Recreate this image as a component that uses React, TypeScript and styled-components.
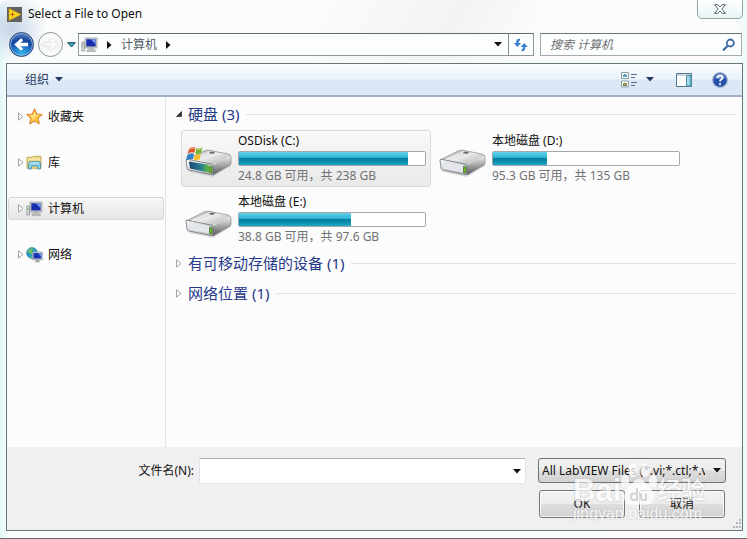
import React from "react";
import styled, { createGlobalStyle } from "styled-components";

const Global = createGlobalStyle`
  * { box-sizing: border-box; }
  body {
    margin: 0;
    background: #fff;
    color: #101010;
    font: 12px/18px "Noto Sans", "Noto Sans CJK SC", sans-serif;
  }
  button, input, select { font: inherit; color: inherit; margin: 0; }
  button { padding: 0; border: 0; background: none; }
  svg { display: block; flex: none; }
`;

const Window = styled.main`
  position: relative;
  display: flex;
  flex-direction: column;
  width: 100%;
  min-height: 100vh;
  padding: 0 4px 7px 6px;
  overflow: hidden;
  border-bottom: 1px solid #626a6c;
  border-top-left-radius: 7px;
  background:
    radial-gradient(circle at 12px 28px, #c5d3e6 0, transparent 34px),
    linear-gradient(115deg, transparent 40%, #f2f3f3 60%, transparent 72%) 0 0 / 100% 62px no-repeat,
    linear-gradient(90deg, #e2f8fa, #fafcfc 8px, #fcfcfc 98%, #effafa);
  background-color: #e9fbfb;
`;

const TitleBar = styled.header`
  display: flex;
  align-items: flex-start;
  height: 33px;
`;

const Title = styled.h1`
  display: flex;
  align-items: center;
  gap: 6px;
  flex: 1;
  margin: 0;
  padding: 5px 0 0 1px;
  font-size: 12px;
  font-weight: 400;
`;

const CloseButton = styled.button`
  display: grid;
  place-items: center;
  width: 46px;
  height: 19px;
  border: 1px solid #94a3a6;
  border-top: 0;
  border-radius: 0 0 5px 5px;
  background: linear-gradient(#fff, #e7f5f5);
`;

const NavRow = styled.nav`
  display: flex;
  align-items: center;
  height: 23px;
  margin-bottom: 7px;
`;

const History = styled.div`
  display: flex;
  align-items: center;
  width: 72px;
  gap: 4px;
  padding-left: 3px;
`;

const RoundButton = styled.button<{ $active?: boolean }>`
  display: grid;
  flex: none;
  place-items: center;
  width: 25px;
  height: 25px;
  border: 1px solid ${(p) => (p.$active ? "#29467a" : "#8c9299")};
  border-radius: 50%;
  background: ${(p) =>
    p.$active
      ? "radial-gradient(circle at 50% 100%, #38c5f4 0, #1d66bd 45%, #13459a 62%, #7398cd 100%)"
      : "linear-gradient(#fff, #eef0f0 50%, #fcfdfd)"};
  box-shadow: inset 0 0 0 1px ${(p) => (p.$active ? "#84b1df" : "#fff")};
`;

const AddressBar = styled.div`
  display: flex;
  flex: 1;
  height: 23px;
  border: 1px solid #90979b;
  border-top-color: #62686b;
  background: #fdfefe;
`;

const Crumbs = styled.div`
  display: flex;
  flex: 1;
  align-items: center;
  gap: 9px;
  padding-left: 2px;
  color: #535e69;
`;

const BarButton = styled.button<{ $divided?: boolean }>`
  display: grid;
  place-items: center;
  width: ${(p) => (p.$divided ? "25px" : "20px")};
  border-left: ${(p) => (p.$divided ? "1px solid #858c90" : "0")};
`;

const SearchBox = styled.div`
  display: flex;
  align-items: center;
  width: 202px;
  height: 23px;
  margin: 0 1px 0 6px;
  padding: 0 5px 0 9px;
  border: 1px solid #a3abae;
  border-top-color: #6d7478;
  background: #fdfefe;
`;

const SearchInput = styled.input`
  flex: 1;
  min-width: 0;
  padding: 0;
  border: 0;
  outline: 0;
  background: transparent;
  font-style: italic;
  &::placeholder { color: #6d7072; opacity: 1; }
`;

const Panel = styled.section`
  display: flex;
  flex: 1;
  flex-direction: column;
  border: 1px solid #66757b;
  background: #fcfcfc;
`;

const Toolbar = styled.div`
  display: flex;
  align-items: center;
  height: 33px;
  padding: 0 14px 0 18px;
  border-bottom: 2px solid #a1b0c8;
  background: linear-gradient(#fbfdff, #ecf3fb 48%, #dce7f5 52%, #dce8f6);
  color: #263b62;
`;

const ToolButton = styled.button<{ $gap?: number }>`
  display: flex;
  align-items: center;
  gap: 6px;
  margin-right: ${(p) => p.$gap ?? 0}px;
`;

const Spacer = styled.div`
  flex: 1;
`;

const Body = styled.div`
  display: flex;
  flex: 1;
`;

const Sidebar = styled.aside`
  display: flex;
  flex-direction: column;
  gap: 23px;
  width: 159px;
  padding: 8px 1px;
  border-right: 1px solid #dfe5ea;
`;

const Place = styled.button<{ $selected?: boolean }>`
  display: grid;
  grid-template-columns: 9px 17px 1fr;
  align-items: center;
  column-gap: 0;
  height: 23px;
  padding-left: 8px;
  border: 1px solid ${(p) => (p.$selected ? "#d6d7d8" : "transparent")};
  border-radius: 3px;
  background: ${(p) => (p.$selected ? "linear-gradient(#f7f7f7, #e5e5e5)" : "none")};
  text-align: left;
`;

const PlaceName = styled.span`
  padding-left: 5px;
`;

const Content = styled.div`
  flex: 1;
  min-width: 0;
  padding: 2px 6px 0 9px;
`;

const GroupHeader = styled.h2`
  display: flex;
  align-items: center;
  gap: 5px;
  height: 30px;
  margin: 0;
  color: #253a89;
  font-size: 15px;
  font-weight: 400;
  line-height: 22px;
  &::after {
    content: "";
    flex: 1;
    height: 1px;
    margin-left: 2px;
    background: #dfe2e5;
  }
`;

const Drives = styled.div`
  display: grid;
  grid-template-columns: repeat(auto-fill, 250px);
  gap: 4px;
  padding: 1px 0 0 6px;
`;

const DriveTile = styled.article<{ $selected?: boolean }>`
  display: flex;
  align-items: center;
  gap: 5px;
  height: 57px;
  padding: 0 4px 0 3px;
  border: 1px solid ${(p) => (p.$selected ? "#dadbdc" : "transparent")};
  border-radius: 3px;
  background: ${(p) => (p.$selected ? "linear-gradient(#f9f9f9, #e9e9e9)" : "none")};
`;

const DriveText = styled.div`
  flex: 1;
  min-width: 0;
  white-space: nowrap;
`;

const DriveSpace = styled.div`
  color: #707274;
`;

const Meter = styled.div`
  height: 15px;
  margin: 1px 0;
  border: 1px solid #a4a8aa;
  border-radius: 2px;
  background: #fff;
`;

const MeterFill = styled.div`
  height: 100%;
  background: linear-gradient(#65d1e8, #2eb3d0 42%, #067d9f 50%, #098fae 75%, #20abc5);
`;

const Footer = styled.form`
  display: grid;
  grid-template-columns: 187px 1fr 188px;
  gap: 6px 5px;
  align-content: start;
  height: 83px;
  padding: 11px 16px 0 0;
  background: #f0f0f0;
`;

const FileLabel = styled.label`
  text-align: right;
  line-height: 26px;
`;

const Combo = styled.div`
  display: flex;
  height: 26px;
  margin-right: 7px;
  border: 1px solid #e0e3e4;
  border-top-color: #aaaeb0;
  border-radius: 2px;
  background: #fff;
`;

const ComboButton = styled.button`
  display: grid;
  place-items: center;
  width: 16px;
`;

const FileInput = styled.input`
  flex: 1;
  min-width: 0;
  border: 0;
  outline: 0;
  background: transparent;
`;

const SelectWrap = styled.div`
  display: flex;
  align-items: center;
  height: 25px;
  padding-right: 4px;
  border: 1px solid #6f7273;
  border-radius: 3px;
  background: linear-gradient(#f3f3f3, #ececec 48%, #dedede 52%, #d2d2d2);
`;

const TypeSelect = styled.select`
  appearance: none;
  flex: 1;
  min-width: 0;
  margin-right: 8px;
  padding: 0 0 0 3px;
  border: 0;
  outline: 0;
  background: transparent;
  overflow: hidden;
  text-overflow: clip;
`;

const Actions = styled.div`
  display: grid;
  grid-template-columns: 1fr 1fr;
  grid-column: 3;
  gap: 14px;
  padding: 0 1px;
`;

const DialogButton = styled.button`
  height: 28px;
  border: 1px solid #747778;
  border-radius: 3px;
  background: linear-gradient(#f4f4f4, #ececec 48%, #dedede 52%, #d1d1d1);
  box-shadow: inset 0 0 0 1px #f8f8f8;
`;

const Grip = styled.div`
  position: absolute;
  right: 5px;
  bottom: 9px;
`;

const Watermark = styled.div`
  position: absolute;
  right: 40px;
  bottom: 16px;
  width: 134px;
  color: #fff;
  opacity: 0.75;
  pointer-events: none;
  text-shadow: 0 0 2px #aaa;
  white-space: nowrap;
`;

const Brand = styled.div`
  display: flex;
  align-items: flex-end;
  height: 43px;
  font: 700 31px/30px "Liberation Sans", "Noto Sans CJK SC", sans-serif;
`;

const BrandCjk = styled.span`
  font-size: 24px;
  font-weight: 500;
`;

const WatermarkUrl = styled.div`
  font: 16px/16px "Liberation Sans", sans-serif;
`;

const Arrow = ({ dir = "down", color = "#111" }: { dir?: "down" | "right"; color?: string }) =>
  dir === "down" ? (
    <svg width="8" height="5" viewBox="0 0 8 5"><path d="M0 0h8L4 4.5z" fill={color} /></svg>
  ) : (
    <svg width="5" height="8" viewBox="0 0 5 8"><path d="M0 0v8l4.5-4z" fill={color} /></svg>
  );

const Expander = ({ open }: { open?: boolean }) => (
  <svg width="8" height="9" viewBox="0 0 8 9">
    {open ? (
      <path d="M6.5 1.5v5h-5z" fill="#393b3e" stroke="#222" strokeWidth=".7" />
    ) : (
      <path d="M1.5.8v7.4L6 4.5z" fill="#fff" stroke="#a2a5a8" />
    )}
  </svg>
);

const AppIcon = () => (
  <svg width="15" height="15" viewBox="0 0 15 15">
    <path d="M0 0h15v15H0z" fill="#62615e" />
    <path d="M2 1.5 14 7.5 2 13.5z" fill="#f9d51d" stroke="#c99e13" strokeWidth=".6" />
    <path d="M3.5 7.5h4M5.5 5.5v4" stroke="#b15a16" />
  </svg>
);

const CloseIcon = () => (
  <svg width="12" height="10" viewBox="0 0 12 10">
    <path d="M.7.7h3.1L6 3 8.2.7h3.1L7.9 5l3.4 4.3H8.2L6 7 3.8 9.3H.7L4.1 5z" fill="#fff" stroke="#565c68" strokeLinejoin="round" />
  </svg>
);

const HistoryArrow = ({ back }: { back?: boolean }) => (
  <svg width="17" height="15" viewBox="0 0 17 15">
    {back ? (
      <path d="m8 1.2 2.2 2.1-2.6 2.5H15v3.4H7.6l2.6 2.5L8 13.8 1.3 7.5z" fill="#fff" />
    ) : (
      <path d="m9 1.2-2.2 2.1 2.6 2.5H2v3.4h7.4l-2.6 2.5L9 13.8l6.7-6.3z" fill="#fafcfc" stroke="#dde0e0" strokeWidth=".7" />
    )}
  </svg>
);

const ComputerIcon = () => (
  <svg width="17" height="16" viewBox="0 0 17 16">
    <path d="M.8 5h2.7v9H.8z" fill="#d7d9d5" stroke="#858e90" strokeWidth=".7" />
    <path d="M1.3 8h1.4" stroke="#55a252" />
    <path d="M4 1h12v10H4z" fill="#d7d7d0" stroke="#8e9396" strokeWidth=".7" />
    <path d="M5.3 2.2h9.4v7.3H5.3z" fill="#182dae" />
    <path d="M9.5 2.2h5.2v5z" fill="#7198ed" />
    <path d="M8.3 11h3.5l.7 2h1.8v1.6H6V13h1.7z" fill="#bec4c4" stroke="#899294" strokeWidth=".5" />
  </svg>
);

const StarIcon = () => (
  <svg width="17" height="17" viewBox="0 0 16 16">
    <path d="m8 .8 2.1 4.8 5.1.5-3.8 3.5 1.1 5.2L8 12.2l-4.5 2.6 1.1-5.2L.8 6.1l5.1-.5z" fill="#ffc548" stroke="#d8882f" strokeLinejoin="round" />
    <path d="m8 3 1.3 3.6 3.2.4-4 1.5L6 12l.2-3-3-2 3.5-.4z" fill="#ffe27b" />
  </svg>
);

const LibraryIcon = () => (
  <svg width="17" height="16" viewBox="0 0 17 16">
    <path d="M1 2.3h5l1-1h8v12H1z" fill="#ecd883" stroke="#b99e49" strokeWidth=".8" />
    <path d="M2 4.2h12" stroke="#fff2b4" />
    <path d="M2.5 14V8.5q0-2 2-2h8q2 0 2 2V14h-3v-3h-6v3z" fill="#86cfe7" stroke="#438ba5" strokeWidth=".8" />
    <path d="M4 8h9" stroke="#d0f1fa" />
  </svg>
);

const NetworkIcon = () => (
  <svg width="17" height="16" viewBox="0 0 17 16">
    <circle cx="6" cy="6" r="5.4" fill="#2598cf" stroke="#176b99" strokeWidth=".6" />
    <path d="M2 3q3-3 6-1L6 4l1 2-2 2-1-2-3-.5zM4 9l3 1-1 1.5q-2-.5-2-2.5" fill="#66bd68" />
    <path d="M6.5 5h9.8v7.7H6.5z" fill="#d7dad8" stroke="#818b91" strokeWidth=".6" />
    <path d="M7.5 6h7.8v5.6H7.5z" fill="#1933b4" />
    <path d="M11.7 6h3.6v4z" fill="#628bea" />
    <path d="M10 13h3l1 2.3H9z" fill="#9aa3a6" />
  </svg>
);

const RefreshIcon = () => (
  <svg width="16" height="14" viewBox="0 0 16 14" fill="#3980d1">
    <path d="M7 .8Q2.8.5 3.2 5H.8L4.4 9 8 5H5.5Q5.4 2.8 7 2.6z" />
    <path d="M8.5 13.2q4.2.2 3.8-4.2h2.5l-3.6-4-3.6 4h2.5q.1 2.2-1.6 2.4z" />
  </svg>
);

const SearchIcon = () => (
  <svg width="14" height="14" viewBox="0 0 14 14" fill="none">
    <circle cx="8.4" cy="5" r="3.5" stroke="#406ba5" strokeWidth="1.8" />
    <path d="m5.7 7.8-4 4" stroke="#406ba5" strokeWidth="2.3" strokeLinecap="round" />
  </svg>
);

const ViewIcon = () => (
  <svg width="16" height="16" viewBox="0 0 16 16">
    <path d="M.5.5h7v6h-7zM.5 9h7v6h-7z" fill="#f5fbff" stroke="#8da0a6" />
    <path d="M2 4.8V3l2-1 2 1v1.8z" fill="#3c94b1" />
    <path d="M2 11h4v3H2z" fill="#67834a" />
    <path d="m2 11 2 2 2-2" stroke="#d4b34e" fill="none" />
    <path d="M10 2.5h6M10 5.5h4M10 10.5h6M10 13.5h4" stroke="#5b6d89" />
  </svg>
);

const PaneIcon = () => (
  <svg width="16" height="14" viewBox="0 0 16 14">
    <path d="M.5.5h15v13H.5z" fill="#fcfdff" stroke="#4f7890" />
    <path d="M1 2h14" stroke="#9aacbd" />
    <path d="M10.5 2.5H15V13h-4.5z" fill="#80c9df" stroke="#4c8ba5" />
    <path d="M12 3v9" stroke="#c8eff5" />
  </svg>
);

const HelpIcon = () => (
  <svg width="16" height="16" viewBox="0 0 16 16">
    <circle cx="8" cy="8" r="7.2" fill="#2450a8" stroke="#879dc7" strokeWidth="1.2" />
    <path d="M2.5 6Q4 1.8 8 1.8T13.5 6Q8 8.5 2.5 6" fill="#6689c9" />
    <path d="M5.5 6q.2-2.3 2.6-2.3 2.5 0 2.5 2 0 1.2-1.4 1.9Q8 8.3 8 9.6" fill="none" stroke="#fff" strokeWidth="1.7" />
    <circle cx="8" cy="12" r="1.1" fill="#fff" />
  </svg>
);

const DriveIcon = ({ system }: { system?: boolean }) => (
  <svg width="48" height="36" viewBox="0 -2 48 36">
    <defs>
      <linearGradient id="driveTop" x2="1" y2="1"><stop stopColor="#8f9294" /><stop offset=".45" stopColor="#ededed" /><stop offset="1" stopColor="#a0a2a4" /></linearGradient>
      <linearGradient id="driveSide" x2="0" y2="1"><stop stopColor="#f5f5f5" /><stop offset="1" stopColor="#55585b" /></linearGradient>
      <linearGradient id="driveFront" x2="1" y2="1"><stop stopColor="#fafbff" /><stop offset="1" stopColor="#a6abb3" /></linearGradient>
      <linearGradient id="systemFront" x2="1"><stop stopColor="#1b466b" /><stop offset=".6" stopColor="#267e92" /><stop offset="1" stopColor="#67bd3c" /></linearGradient>
    </defs>
    <path d="M2 25 27 32l19-12v3L28 34 4 29z" fill="#aaa" opacity=".35" />
    <path d="M1 17 19 8q2-1 5-.7L43 11q3 1 1 2L28 23z" fill="url(#driveTop)" stroke="#85888a" strokeWidth=".7" />
    <path d="m28 22 17-10q1 0 1 3v5q0 1-1 2L28 32z" fill="url(#driveSide)" stroke="#76797b" strokeWidth=".6" />
    <path d="M1 17q0-1 2-.6L26 21q2 .5 2 2v8q0 1-2 .6L4 27q-2-.5-2-2z" fill="url(#driveFront)" stroke="#6e7375" strokeWidth=".8" />
    <path d="M4 18.5 24 22v7.5L5 25.5z" fill={system ? "url(#systemFront)" : "#e4e6ec"} />
    <path d="M24.5 23.5 27 24v6l-2.5-.6z" fill="#72bd23" stroke="#315f24" strokeWidth=".6" />
    <path d="M7 17 25 8.7M28 22l16-9.5" fill="none" stroke="#fff" strokeWidth=".7" />
    <ellipse cx="27" cy="9.7" rx="2.8" ry="1" fill="#6a6d70" />
    {system && (
      <g>
        <path d="M4 6q3-3.4 6.5-1.3L9.3 10Q6 8.3 2.5 11z" fill="#df5427" />
        <path d="M11.5 5q3 1.5 6-.7L16 10q-3 2-5.7.4z" fill="#79b72f" />
        <path d="M2.3 12Q6 9.3 9 11l-1.3 5.5Q4.7 15 1 17.5z" fill="#337fc8" />
        <path d="M10 11.2q3 1.5 6-.5l-1.5 5.8q-3 2-5.8.3z" fill="#f8be2c" />
        <path d="M4.5 6.3q2-2 5-.9M12 5.8q2 1 4-.3" stroke="#ffe2b3" strokeWidth=".8" fill="none" />
      </g>
    )}
  </svg>
);

const PawIcon = () => (
  <svg width="36" height="43" viewBox="0 0 36 43" fill="#fff">
    <ellipse cx="12" cy="7" rx="4.8" ry="7" />
    <ellipse cx="24" cy="7" rx="4.8" ry="7" />
    <ellipse cx="4" cy="18" rx="4" ry="6" />
    <ellipse cx="32" cy="18" rx="4" ry="6" />
    <path d="M18 16q4 0 7 5 8 6 8 13 0 8-8 7.5H11Q3 42 3 34q0-7 8-13 3-5 7-5" />
    <path d="M16 25v12h-3q-3 0-3-3.3 0-3.2 3-3.2h3M20 30.5V35q0 2 2 2h3v-6.5" fill="none" stroke="#cacaca" strokeWidth="2" />
  </svg>
);

const drives = [
  { name: "OSDisk (C:)", space: "24.8 GB 可用，共 238 GB", used: 91, system: true },
  { name: "本地磁盘 (D:)", space: "95.3 GB 可用，共 135 GB", used: 29 },
  { name: "本地磁盘 (E:)", space: "38.8 GB 可用，共 97.6 GB", used: 60 },
];

const places = [
  { name: "收藏夹", Icon: StarIcon },
  { name: "库", Icon: LibraryIcon },
  { name: "计算机", Icon: ComputerIcon, selected: true },
  { name: "网络", Icon: NetworkIcon },
];

export default function App() {
  return (
    <>
      <Global />
      <Window>
        <TitleBar>
          <Title><AppIcon />Select a File to Open</Title>
          <CloseButton aria-label="Close"><CloseIcon /></CloseButton>
        </TitleBar>
        <NavRow>
          <History>
            <RoundButton $active aria-label="Back"><HistoryArrow back /></RoundButton>
            <RoundButton aria-label="Forward"><HistoryArrow /></RoundButton>
            <button aria-label="Recent locations">
              <svg width="9" height="6" viewBox="0 0 9 6"><path d="M.7.7h7.6L4.5 5z" fill="#35b3cb" stroke="#223f59" /></svg>
            </button>
          </History>
          <AddressBar>
            <Crumbs><ComputerIcon /><Arrow dir="right" /><span>计算机</span><Arrow dir="right" /></Crumbs>
            <BarButton aria-label="Address history"><Arrow /></BarButton>
            <BarButton $divided aria-label="Refresh"><RefreshIcon /></BarButton>
          </AddressBar>
          <SearchBox>
            <SearchInput aria-label="搜索 计算机" placeholder="搜索 计算机" />
            <SearchIcon />
          </SearchBox>
        </NavRow>
        <Panel>
          <Toolbar>
            <ToolButton>组织<Arrow color="#263b62" /></ToolButton>
            <Spacer />
            <ToolButton $gap={9} aria-label="View"><ViewIcon /></ToolButton>
            <ToolButton $gap={22} aria-label="View options"><Arrow color="#263b62" /></ToolButton>
            <ToolButton $gap={20} aria-label="Preview pane"><PaneIcon /></ToolButton>
            <ToolButton aria-label="Help"><HelpIcon /></ToolButton>
          </Toolbar>
          <Body>
            <Sidebar>
              {places.map(({ name, Icon, selected }) => (
                <Place key={name} $selected={selected}>
                  <Expander /><Icon /><PlaceName>{name}</PlaceName>
                </Place>
              ))}
            </Sidebar>
            <Content>
              <GroupHeader><Expander open />硬盘 (3)</GroupHeader>
              <Drives>
                {drives.map((drive) => (
                  <DriveTile key={drive.name} $selected={drive.system}>
                    <DriveIcon system={drive.system} />
                    <DriveText>
                      <div>{drive.name}</div>
                      <Meter><MeterFill style={{ width: `${drive.used}%` }} /></Meter>
                      <DriveSpace>{drive.space}</DriveSpace>
                    </DriveText>
                  </DriveTile>
                ))}
              </Drives>
              <GroupHeader><Expander />有可移动存储的设备 (1)</GroupHeader>
              <GroupHeader><Expander />网络位置 (1)</GroupHeader>
            </Content>
          </Body>
          <Footer onSubmit={(e) => e.preventDefault()}>
            <FileLabel htmlFor="filename">文件名(N):</FileLabel>
            <Combo>
              <FileInput id="filename" />
              <ComboButton type="button" aria-label="Recent files"><Arrow /></ComboButton>
            </Combo>
            <SelectWrap>
              <TypeSelect aria-label="File type">
                <option>All LabVIEW Files (*.vi;*.ctl;*.vit;*.ctt)</option>
              </TypeSelect>
              <Arrow />
            </SelectWrap>
            <Actions>
              <DialogButton>OK</DialogButton>
              <DialogButton type="button">取消</DialogButton>
            </Actions>
          </Footer>
        </Panel>
        <Grip>
          <svg width="10" height="10" viewBox="0 0 10 10" fill="#b5b8ba">
            <path d="M7 0h2v2H7zM4 3h2v2H4zM7 3h2v2H7zM1 7h2v2H1zM4 7h2v2H4zM7 7h2v2H7z" />
          </svg>
        </Grip>
        <Watermark aria-hidden="true">
          <Brand>Bai<PawIcon /><BrandCjk>经验</BrandCjk></Brand>
          <WatermarkUrl>jingyan.baidu.com</WatermarkUrl>
        </Watermark>
      </Window>
    </>
  );
}
